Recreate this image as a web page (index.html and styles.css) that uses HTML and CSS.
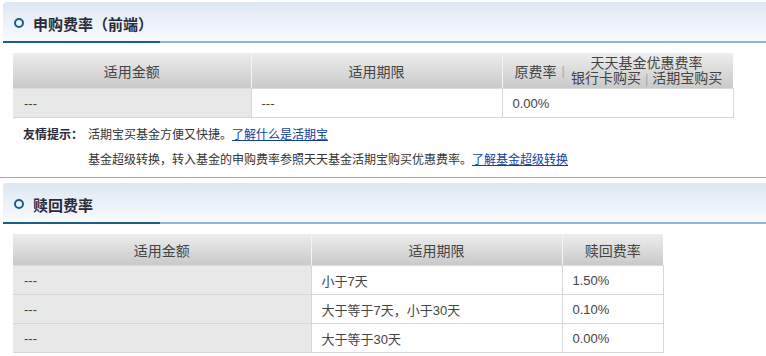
FILE: index.html
```html
<!DOCTYPE html>
<html lang="zh-CN">
<head>
<meta charset="utf-8">
<title>费率</title>
<link rel="stylesheet" href="styles.css">
</head>
<body>
<div class="page">
  <div class="sec-head sec-head-1">
    <span class="ring"></span>
    <h2 class="sec-title">申购费率（前端）</h2>
  </div>
  <table class="fee-table t1">
    <colgroup><col class="c1a"><col class="c1b"><col class="c1c"></colgroup>
    <thead>
      <tr>
        <th>适用金额</th>
        <th>适用期限</th>
        <th class="th-rate">
          <div class="rate-head">
            <span class="orig">原费率</span><span class="bar">|</span>
            <span class="disc">
              <span class="disc-l1">天天基金优惠费率</span>
              <span class="disc-l2">银行卡购买<span class="bar bar-in">|</span>活期宝购买</span>
            </span>
          </div>
        </th>
      </tr>
    </thead>
    <tbody>
      <tr><td class="first">---</td><td>---</td><td>0.00%</td></tr>
    </tbody>
  </table>
  <div class="tips">
    <div class="tip-row"><b class="tip-label">友情提示：</b><span>活期宝买基金方便又快捷。<a href="#">了解什么是活期宝</a></span></div>
    <div class="tip-row tip-indent"><span>基金超级转换，转入基金的申购费率参照天天基金活期宝购买优惠费率。<a href="#">了解基金超级转换</a></span></div>
  </div>
  <div class="sep"></div>
  <div class="sec-head">
    <span class="ring"></span>
    <h2 class="sec-title">赎回费率</h2>
  </div>
  <table class="fee-table t2">
    <colgroup><col class="c2a"><col class="c2b"><col class="c2c"></colgroup>
    <thead>
      <tr><th>适用金额</th><th>适用期限</th><th>赎回费率</th></tr>
    </thead>
    <tbody>
      <tr><td class="first">---</td><td>小于7天</td><td>1.50%</td></tr>
      <tr><td class="first">---</td><td>大于等于7天，小于30天</td><td>0.10%</td></tr>
      <tr><td class="first">---</td><td>大于等于30天</td><td>0.00%</td></tr>
    </tbody>
  </table>
</div>
</body>
</html>
```

FILE: styles.css
```css
html, body {
  margin: 0;
  padding: 0;
  background: #fff;
}
body {
  font-family: "Liberation Sans", "Noto Sans CJK SC", sans-serif;
  color: #333;
}
.page {
  width: 766px;
  padding-top: 2px;
}
.sec-head {
  margin-left: 3px;
  height: 41px;
  box-sizing: border-box;
  padding: 3px 0 2px 11px;
  display: flex;
  align-items: center;
  border-radius: 4px 0 0 0;
  background:
    linear-gradient(to right, #1d5f87 157px, #8db8d5 157px) left bottom / 100% 2px no-repeat,
    linear-gradient(#dce7f3, #fbfcfe);
}
.ring {
  width: 6px;
  height: 6px;
  border: 2px solid #1d5f87;
  border-radius: 50%;
  margin-right: 9px;
}
.sec-title {
  margin: 0;
  font-size: 15px;
  font-weight: bold;
  color: #2a2a3a;
}
.fee-table {
  border-collapse: collapse;
  margin: 10px 0 0 13px;
  table-layout: fixed;
  font-size: 13px;
  color: #444;
}
.t1 { width: 720px; }
.t2 { width: 650px; }
.c1a { width: 238px; }
.c1b { width: 251px; }
.c1c { width: 231px; }
.c2a { width: 298px; }
.c2b { width: 251px; }
.c2c { width: 101px; }
.fee-table th {
  height: 35px;
  padding: 0;
  font-size: 14px;
  font-weight: normal;
  color: #444;
  text-align: center;
  background: linear-gradient(#ededed, #c9c9c9);
  border-left: 1px solid #f4f4f4;
  border-bottom: 1px solid #dcdcdc;
}
.fee-table th:first-child { border-left: none; }
.t2 th { height: 31px; }
.fee-table td {
  height: 28px;
  padding: 0 0 0 10px;
  border: 1px solid #d6d6d6;
  background: #fff;
}
.fee-table td.first {
  background: #e8e8e8;
  padding-left: 11px;
}
.fee-table td:first-child { border-left: none; }
.th-rate { text-align: left !important; }
.rate-head {
  display: flex;
  align-items: center;
  padding-left: 12px;
}
.orig { margin-top: 1px; }
.bar {
  color: #a9a9a9;
  margin: 0 6px 0 5px;
  font-size: 13px;
}
.bar-in { margin: 0 4px; }
.disc {
  display: flex;
  flex-direction: column;
  align-items: center;
  line-height: 14px;
}
.disc-l2 { margin-top: 1px; }
.tips {
  font-size: 12px;
  color: #333;
  padding: 9px 0 0 23px;
}
.tip-row {
  display: flex;
  height: 25px;
  line-height: 16px;
}
.tip-label {
  width: 65px;
  color: #2a2a3a;
}
.tip-indent { padding-left: 65px; }
.tips a {
  color: #12409a;
  text-decoration: underline;
}
.sep {
  height: 1px;
  background: #8fb0c2;
  margin: 0 0 5px;
}
```
